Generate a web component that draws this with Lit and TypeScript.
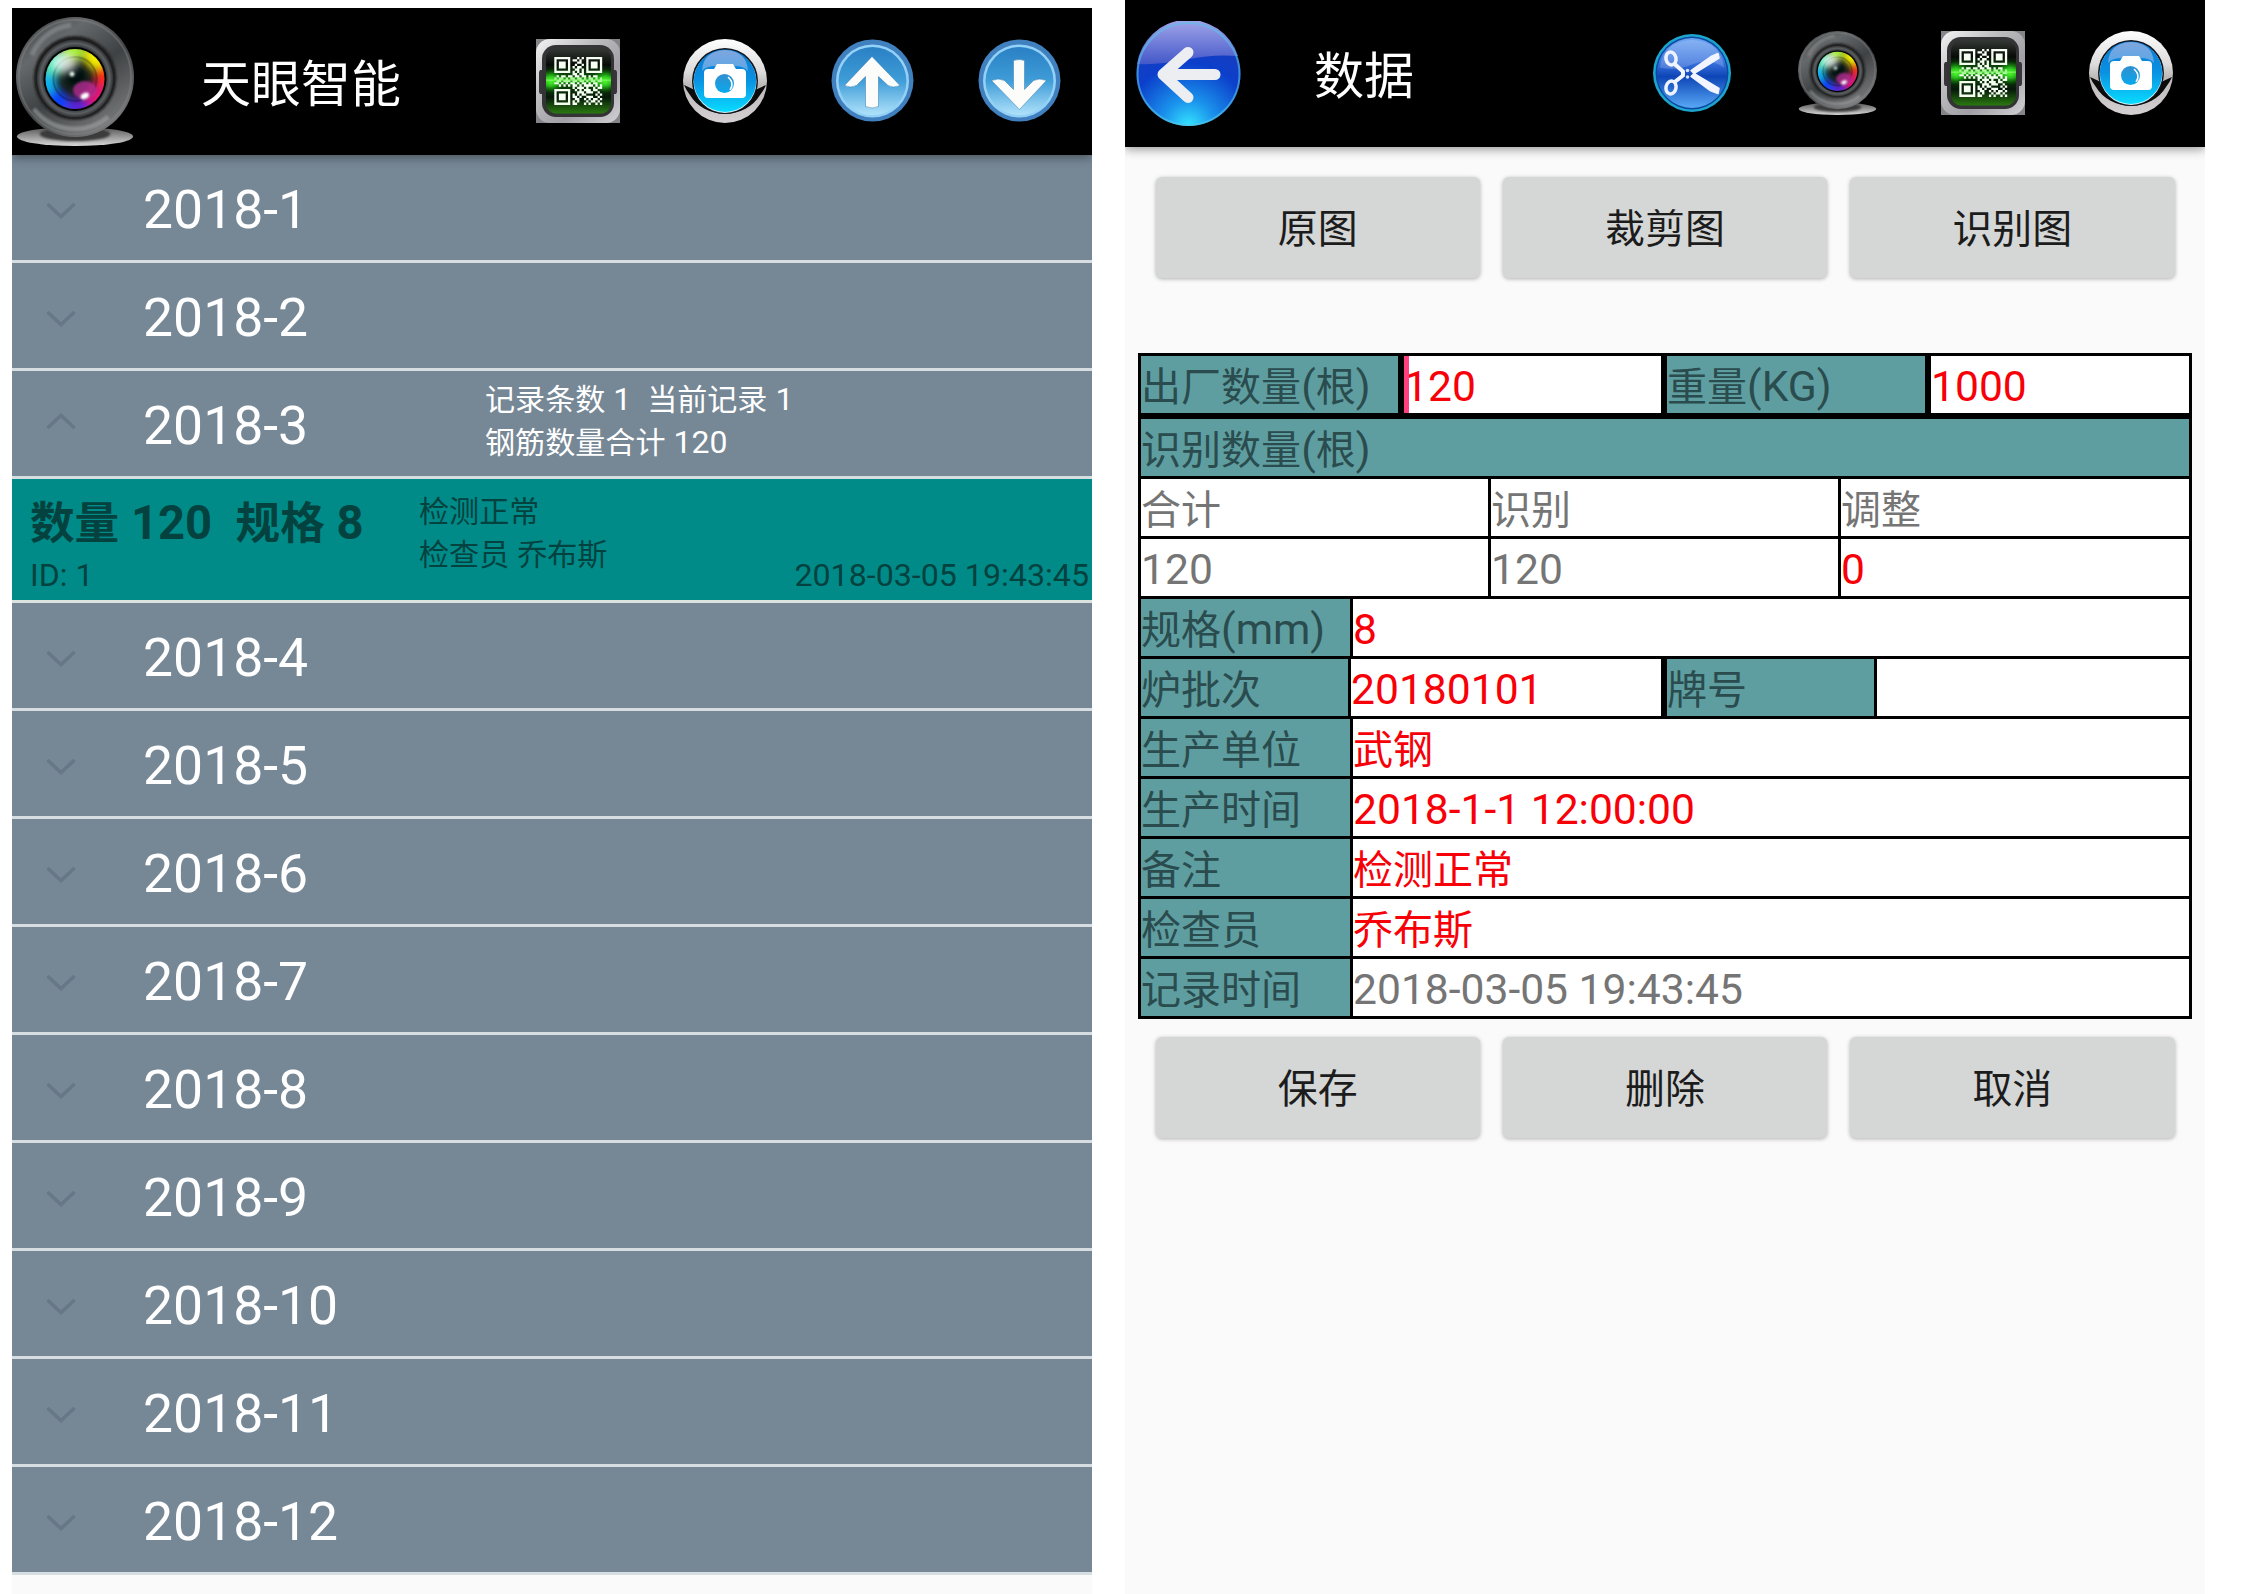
import { LitElement, html, svg, css, nothing } from "lit";
import { customElement, property } from "lit/decorators.js";
import { classMap } from "lit/directives/class-map.js";
import { styleMap } from "lit/directives/style-map.js";

/** Splits a label into Latin and Han runs; Han runs are set slightly smaller. */
const mixed = (text: string) =>
  text
    .split(/([\u4e00-\u9fff]+)/)
    .filter((run) => run.length > 0)
    .map((run) => (/[\u4e00-\u9fff]/.test(run) ? html`<span class="han">${run}</span>` : run));

const QR_ROWS = [
  "111111100010101111111",
  "100000101101001000001",
  "101110100011001011101",
  "101110100100101011101",
  "101110101011001011101",
  "100000100110101000001",
  "111111101010101111111",
  "000000001101100000000",
  "010110110110110101100",
  "101101011011010110101",
  "011011101101101011011",
  "110101011010110101100",
  "001010101101011110101",
  "000000001011101001011",
  "111111100101011101100",
  "100000100011101110010",
  "101110101010110000101",
  "101110101101001110010",
  "101110100110010101101",
  "100000101010001011010",
  "111111101100010100101",
];

const qrPath = QR_ROWS.map((row, y) =>
  [...row].map((bit, x) => (bit === "1" ? `M${x} ${y}h1v1h-1z` : "")).join("")
).join("");

const webcam = svg`
  <defs>
    <linearGradient id="base" x1="0" y1="0" x2="0" y2="1">
      <stop offset="0" stop-color="#555"/><stop offset="1" stop-color="#d8d8d8"/>
    </linearGradient>
    <linearGradient id="shell" x1="0" y1="0" x2=".7" y2="1">
      <stop offset="0" stop-color="#3c3e40"/><stop offset=".3" stop-color="#66696b"/>
      <stop offset=".6" stop-color="#3f4244"/><stop offset="1" stop-color="#77797a"/>
    </linearGradient>
    <radialGradient id="ring">
      <stop offset=".6" stop-color="#0a0a0a"/><stop offset=".8" stop-color="#303335"/>
      <stop offset=".9" stop-color="#5c5f61"/><stop offset="1" stop-color="#2c2e30"/>
    </radialGradient>
    <clipPath id="lens"><circle cx="60" cy="62" r="30"/></clipPath>
    <filter id="soft" x="-50%" y="-50%" width="200%" height="200%"><feGaussianBlur stdDeviation="4.5"/></filter>
    <filter id="fine" x="-50%" y="-50%" width="200%" height="200%"><feGaussianBlur stdDeviation="1.3"/></filter>
  </defs>
  <ellipse cx="60" cy="119.500" rx="59" ry="9.500" fill="url(#base)"/>
  <ellipse cx="60" cy="117" rx="36" ry="7" fill="#3b3b3b" filter="url(#fine)"/>
  <circle cx="60" cy="60" r="60" fill="url(#shell)"/>
  <circle cx="60" cy="60" r="57" fill="none" stroke="#8b8e90" stroke-opacity=".35" stroke-width="2"/>
  <path d="M18 92a54 54 0 0 0 76 8" fill="none" stroke="#a5a8aa" stroke-opacity=".55" stroke-width="5" filter="url(#fine)"/>
  <path d="M16 38a50 50 0 0 1 40-30" fill="none" stroke="#8f9294" stroke-opacity=".6" stroke-width="5" filter="url(#fine)"/>
  <circle cx="60" cy="61" r="42" fill="#1b1c1d" filter="url(#fine)"/>
  <circle cx="60" cy="61.500" r="39" fill="url(#ring)"/>
  <circle cx="60" cy="62" r="32" fill="#030303"/>
  <g clip-path="url(#lens)">
    <rect x="30" y="32" width="60" height="60" fill="#222"/>
    <g filter="url(#soft)">
      <circle cx="82" cy="40" r="13" fill="#f4f000"/>
      <circle cx="92" cy="60" r="12" fill="#ff2a10"/>
      <circle cx="83" cy="80" r="13" fill="#e01472"/>
      <circle cx="63" cy="94" r="13" fill="#5a20d8"/>
      <circle cx="41" cy="86" r="13" fill="#1042ff"/>
      <circle cx="30" cy="66" r="12" fill="#10b4f0"/>
      <circle cx="37" cy="46" r="13" fill="#45dfb0"/>
      <circle cx="58" cy="33" r="12" fill="#a4ee30"/>
    </g>
    <circle cx="60" cy="62" r="22" fill="none" stroke="#000" stroke-opacity=".25" stroke-width="2"/>
    <circle cx="60" cy="60" r="12" fill="#04140c" filter="url(#soft)"/>
    <circle cx="60" cy="58" r="8" fill="#050d08" filter="url(#fine)"/>
    <ellipse cx="49" cy="46" rx="13" ry="10" fill="#fff" fill-opacity=".75" filter="url(#soft)"/>
    <ellipse cx="70" cy="73" rx="12" ry="9" fill="#b02a90" fill-opacity=".8" filter="url(#fine)"/>
  </g>
  <circle cx="57" cy="57" r="2.500" fill="#dff5e8" filter="url(#fine)"/>
  <ellipse cx="70" cy="79" rx="4.500" ry="3" fill="#fff" filter="url(#fine)" transform="rotate(-25 70 79)"/>`;

const qr = svg`
  <defs>
    <linearGradient id="frame" x1="0" y1="0" x2="1" y2="1">
      <stop offset="0" stop-color="#f4f4f4"/><stop offset=".35" stop-color="#bdbdc0"/>
      <stop offset=".65" stop-color="#a2a0a6"/><stop offset="1" stop-color="#d2d2d6"/>
    </linearGradient>
    <linearGradient id="screen" x1="0" y1="0" x2="0" y2="1">
      <stop offset="0" stop-color="#343834"/><stop offset=".25" stop-color="#070a07"/>
      <stop offset=".42" stop-color="#0e4a0b"/><stop offset=".5" stop-color="#1d8a12"/>
      <stop offset=".6" stop-color="#0b3a08"/><stop offset=".75" stop-color="#06180a"/><stop offset="1" stop-color="#2a7a10"/>
    </linearGradient>
    <radialGradient id="beam"><stop offset="0" stop-color="#5dff3a"/><stop offset=".45" stop-color="#2fd820" stop-opacity=".75"/><stop offset="1" stop-color="#0c8000" stop-opacity="0"/></radialGradient>
    <clipPath id="pane"><rect x="10" y="9.500" width="65" height="65" rx="10"/></clipPath>
  </defs>
  <rect width="84" height="84" fill="#858589"/>
  <rect width="84" height="84" rx="14" fill="url(#frame)"/>
  <path d="M4 31h5v24H4l-1-2V33z" fill="#38363a"/>
  <path d="M80 31h-5v24h5l1-2V33z" fill="#38363a"/>
  <rect x="6" y="6" width="72" height="72" rx="14" fill="#343336"/>
  <rect x="10" y="9.500" width="65" height="65" rx="10" fill="url(#screen)"/>
  <g clip-path="url(#pane)">
    <ellipse cx="15" cy="42" rx="14" ry="12" fill="url(#beam)"/>
    <ellipse cx="69" cy="42" rx="14" ry="12" fill="url(#beam)"/>
  </g>
  <path d=${qrPath} fill="#f5fff2" transform="translate(18.300 18) scale(2.280)"/>
  <rect x="10" y="38" width="65" height="6" fill="#3be01e" fill-opacity=".35"/>
  <rect x="10" y="40.500" width="65" height="1.300" fill="#8cff70" fill-opacity=".7"/>`;

const camera = svg`
  <defs>
    <linearGradient id="rim" x1="0" y1="0" x2="0" y2="1">
      <stop offset="0" stop-color="#fff"/><stop offset=".4" stop-color="#dcdada"/>
      <stop offset=".55" stop-color="#bdb9b9"/><stop offset="1" stop-color="#d5d0d3"/>
    </linearGradient>
    <linearGradient id="glass" x1="0" y1="0" x2="0" y2="1">
      <stop offset="0" stop-color="#0a78d0"/><stop offset=".5" stop-color="#0a92e2"/><stop offset="1" stop-color="#08dcff"/>
    </linearGradient>
    <linearGradient id="gloss" x1="0" y1="0" x2="0" y2="1">
      <stop offset="0" stop-color="#7fa6de"/><stop offset="1" stop-color="#5ba7e6"/>
    </linearGradient>
    <linearGradient id="eye" x1="0" y1="0" x2="0" y2="1">
      <stop offset="0" stop-color="#2f8fd0"/><stop offset="1" stop-color="#0aa9ec"/>
    </linearGradient>
  </defs>
  <circle cx="42" cy="42" r="42" fill="url(#rim)"/>
  <path d="M1 46L12 51H72L83 46A41.500 41.500 0 0 1 77 56 39.500 35 0 0 1 7 56 41.500 41.500 0 0 1 1 46z" fill="#0b0b0c"/>
  <circle cx="42" cy="42" r="33" fill="#10151c"/>
  <circle cx="42" cy="42.500" r="31.500" fill="#d8f4ff"/>
  <circle cx="42" cy="41.700" r="31.200" fill="url(#glass)"/>
  <path d="M19 32Q20 12 42 11 64 12 65 32q-4-5-14-5H33q-10 0-14 5z" fill="url(#gloss)"/>
  <path d="M25 30h6l3-5h16l3 5h6q4 0 4 4v21q0 4-4 4H25q-4 0-4-4V34q0-4 4-4z" fill="#fff"/>
  <circle cx="41.500" cy="44.500" r="9.500" fill="url(#eye)"/>
  <path d="M45 38q7 6 2 13" fill="none" stroke="#fff" stroke-width="1.500"/>`;

const arrowDisc = (arrow: unknown) => svg`
  <defs>
    <linearGradient id="disc" x1="0" y1="0" x2="0" y2="1">
      <stop offset="0" stop-color="#2a80c4"/><stop offset=".5" stop-color="#3f9dd8"/><stop offset="1" stop-color="#b0e2fa"/>
    </linearGradient>
  </defs>
  <circle cx="41.500" cy="41.500" r="41" fill="#4080bf"/>
  <circle cx="41.500" cy="42" r="36.500" fill="#93d1f7"/>
  <circle cx="41.500" cy="42" r="34" fill="url(#disc)"/>
  ${arrow}`;

const up = arrowDisc(svg`<path d="M41 17.500L69 46.500q-7 3-12 0L47.500 37.500v30q-6 3-13 0V37.500l-9 9q-6 3-12 0z" fill="#fcfdfb" stroke="#2d77ae" stroke-opacity=".5"/>`);
const down = arrowDisc(svg`<path d="M35.500 21.500q6-2 11 0v29l9-9q6-3 13 0L41.500 70.500 13.500 41.500q7-3 13 0l9 9z" fill="#fcfdfb" stroke="#2d77ae" stroke-opacity=".5"/>`);

const back = svg`
  <defs>
    <radialGradient id="orb" cx=".5" cy="1" r="1"><stop offset="0" stop-color="#35e4ff"/><stop offset=".25" stop-color="#1a93ec"/><stop offset=".6" stop-color="#0c3fcb"/><stop offset="1" stop-color="#1f3ab8"/></radialGradient>
    <linearGradient id="cap" x1="0" y1="0" x2="0" y2="1"><stop offset="0" stop-color="#a2a5ea"/><stop offset="1" stop-color="#4358c8"/></linearGradient>
  </defs>
  <circle cx="52.500" cy="53" r="52" fill="url(#orb)"/>
  <path d="M1 43A52 52 0 0 1 102 35Q76 33 54 38 26 44 1 43z" fill="url(#cap)"/>
  <circle cx="52.500" cy="53" r="51" fill="none" stroke="#58c3e8" stroke-opacity=".6" stroke-width="2"/>
  <path d="M79 53.500H31M52 31.500L27 53.500l25 23" fill="none" stroke="#edeef2" stroke-width="11" stroke-linecap="round" stroke-linejoin="round"/>`;

const scissors = svg`
  <defs>
    <linearGradient id="pool" x1="0" y1="0" x2="0" y2="1"><stop offset="0" stop-color="#6fa6f2"/><stop offset=".35" stop-color="#3a72de"/><stop offset=".55" stop-color="#0d45b6"/><stop offset="1" stop-color="#58a8f6"/></linearGradient>
  </defs>
  <g transform="translate(0 .5)">
  <circle cx="42" cy="41.500" r="39" fill="#1ca6cf"/>
  <circle cx="42" cy="41.500" r="36.500" fill="#0c4aa0"/>
  <circle cx="42" cy="41.500" r="35" fill="url(#pool)"/>
  <path d="M10 36Q13 10 42 8.500 71 10 74 36 58 26 42 33 26 40 10 36z" fill="#fff" fill-opacity=".18"/>
  <g fill="none" stroke="#eef3ff" stroke-width="3.500">
    <ellipse cx="21" cy="27" rx="5" ry="6.500" transform="rotate(-12 21 27)"/>
    <ellipse cx="21" cy="56" rx="5" ry="6.500" transform="rotate(12 21 56)"/>
  </g>
  <path d="M41 39l20-14 7-3 1 4.500L44 42zM41 45l19 14 8 3 1-5L44 42z" fill="#f2f5ff" stroke="#f2f5ff" stroke-width="1.500" stroke-linejoin="round"/>
  <path d="M24 32l9 8v4l-9 7" fill="none" stroke="#f2f5ff" stroke-width="4" stroke-linejoin="round"/>
  <circle cx="37.500" cy="39" r="1.800" fill="#cfe0ff"/><circle cx="37.500" cy="45.500" r="1.800" fill="#cfe0ff"/>
  </g>`;

const ICONS: Record<string, { box: string; art: unknown }> = {
  webcam: { box: "0 0 120 129", art: webcam },
  qr: { box: "0 0 84 84", art: qr },
  camera: { box: "0 0 84 84", art: camera },
  up: { box: "0 0 84 84", art: up },
  down: { box: "0 0 84 84", art: down },
  back: { box: "0 0 105 107", art: back },
  scissors: { box: "0 0 84 84", art: scissors },
};

@customElement("app-icon")
class AppIcon extends LitElement {
  static styles = css`
    :host { display: block; flex: none; }
    .art { display: block; width: 100%; height: 100%; }
  `;
  @property() name = "qr";
  render() {
    const icon = ICONS[this.name];
    return html`<svg class="art" viewBox=${icon.box} preserveAspectRatio="none">${icon.art}</svg>`;
  }
}

const shared = css`
  * { box-sizing: border-box; }
  :host {
    display: flex;
    flex-direction: column;
    width: 1080px;
    height: 100%;
    overflow: hidden;
    background: #fafafa;
    font-family: Roboto, "Noto Sans CJK SC", sans-serif;
    white-space: pre;
  }
  .han { font-size: 0.94em; line-height: 0; }
  .bar {
    position: relative;
    flex: none;
    display: flex;
    align-items: flex-start;
    height: 147px;
    background: #000;
    color: #fff;
    box-shadow: 0 2px 10px rgba(0, 0, 0, 0.42);
  }
  .title { flex: 1; font-size: 50px; line-height: 70px; }
  .tool { width: 84px; height: 84px; }
`;

interface Month {
  label: string;
  open?: boolean;
}

const MONTHS: Month[] = Array.from({ length: 12 }, (_, i) => ({
  label: `2018-${i + 1}`,
  open: i === 2,
}));

@customElement("record-list")
class RecordList extends LitElement {
  static styles = [
    shared,
    css`
      .bar { padding: 31px 30px 0 4px; }
      .logo { width: 118px; height: 129px; margin-top: -22px; }
      .title { padding: 11px 0 0 67px; }
      .tools { display: flex; gap: 63.500px; }
      .month {
        flex: none;
        display: flex;
        height: 108px;
        border-bottom: 3px solid #d7dee1;
        background: #768796;
        color: #fff;
      }
      .mark { width: 34px; height: 20px; margin: 45px 0 0 32px; flex: none; }
      .mark.open { transform: scaleY(-1); margin-top: 41px; }
      .stroke { fill: none; stroke: #677787; stroke-width: 3.500; }
      .name { width: 342px; padding-left: 65px; font-size: 53.500px; line-height: 109px; }
      .totals { padding: 7px 0 0 65px; font-size: 32px; line-height: 43px; }
      .record {
        flex: none;
        display: grid;
        grid-template-columns: 388px 1fr auto;
        height: 124px;
        padding: 0 3px 0 18px;
        border-bottom: 3px solid #dbe3e0;
        background: #008b89;
        color: #04423f;
        font-size: 32px;
      }
      .count { font-size: 47.200px; font-weight: 700; line-height: 56px; padding-top: 16px; }
      .count .han { font-size: 0.945em; }
      .ident { line-height: 38px; padding-top: 5px; }
      .note { padding: 11px 0 0 1px; line-height: 43px; }
      .stamp { align-self: end; line-height: 38px; padding-bottom: 6px; font-size: 32.200px; }
    `,
  ];

  render() {
    return html`
      <header class="bar">
        <app-icon class="logo" name="webcam"></app-icon>
        <div class="title">天眼智能</div>
        <div class="tools">
          ${["qr", "camera", "up", "down"].map((n) => html`<app-icon class="tool" name=${n}></app-icon>`)}
        </div>
      </header>
      ${MONTHS.map(
        (m) => html`
          <div class="month">
            <svg class=${classMap({ mark: true, open: !!m.open })} viewBox="0 0 34 20">
              <path class="stroke" d="M3.500 4l13.500 12.500L30.500 4"></path>
            </svg>
            <div class="name">${m.label}</div>
            ${m.open
              ? html`<div class="totals"><div>${mixed("记录条数 1  当前记录 1")}</div><div>${mixed("钢筋数量合计 120")}</div></div>`
              : nothing}
          </div>
          ${m.open
            ? html`<div class="record">
                <div><div class="count">${mixed("数量 120  规格 8")}</div><div class="ident">ID: 1</div></div>
                <div class="note"><div>${mixed("检测正常")}</div><div>${mixed("检查员 乔布斯")}</div></div>
                <div class="stamp">2018-03-05 19:43:45</div>
              </div>`
            : nothing}
        `
      )}
    `;
  }
}

type Kind = "head" | "edit" | "view";
interface Cell {
  text: string;
  kind: Kind;
  width?: number;
  wide?: boolean;
  focused?: boolean;
}

const pair = (label: string, value: string, kind: Kind = "edit"): Cell[] => [
  { text: label, kind: "head", width: 209 },
  { text: value, kind },
];

const ROWS: Cell[][] = [
  [
    { text: "出厂数量(根)", kind: "head", width: 257 },
    { text: "120", kind: "edit", width: 257, wide: true, focused: true },
    { text: "重量(KG)", kind: "head", width: 258, wide: true },
    { text: "1000", kind: "edit", wide: true },
  ],
  [{ text: "识别数量(根)", kind: "head" }],
  [
    { text: "合计", kind: "view", width: 347 },
    { text: "识别", kind: "view", width: 347 },
    { text: "调整", kind: "view" },
  ],
  [
    { text: "120", kind: "view", width: 347 },
    { text: "120", kind: "view", width: 347 },
    { text: "0", kind: "edit" },
  ],
  pair("规格(mm)", "8"),
  [
    { text: "炉批次", kind: "head", width: 207 },
    { text: "20180101", kind: "edit", width: 310 },
    { text: "牌号", kind: "head", width: 207, wide: true },
    { text: "", kind: "edit" },
  ],
  pair("生产单位", "武钢"),
  pair("生产时间", "2018-1-1 12:00:00"),
  pair("备注", "检测正常"),
  pair("检查员", "乔布斯"),
  pair("记录时间", "2018-03-05 19:43:45", "view"),
];

@customElement("record-form")
class RecordForm extends LitElement {
  static styles = [
    shared,
    css`
      .bar { padding: 31px 32px 0 11px; }
      .home { width: 105px; height: 107px; margin-top: -10px; }
      .title { padding: 11px 0 0 73px; }
      .tools { display: flex; gap: 61.500px; }
      .tool.last { margin-left: 2.500px; }
      .cam { width: 79px; height: 84px; margin: 0 3px 0 2px; }
      .actions {
        flex: none;
        display: grid;
        grid-template-columns: repeat(3, 1fr);
        grid-template-rows: 101px;
        gap: 23px;
        height: 101px;
        margin: 30px 30.500px 0;
      }
      .button {
        display: flex;
        align-items: center;
        justify-content: center;
        height: 101px;
        padding-top: 3px;
        border-radius: 6px;
        background: #d5d7d6;
        color: #1c1c1c;
        font-size: 42.500px;
        line-height: 60px;
        box-shadow: 0 1px 4px rgba(0, 0, 0, 0.3);
      }
      .table {
        flex: none;
        display: flex;
        flex-direction: column;
        gap: 3px;
        width: 1054px;
        margin: 75px 13px 0;
        padding: 3px;
        background: #000;
      }
      .row { display: flex; height: 57px; }
      .row.first { margin-bottom: 3px; }
      .cell {
        flex: 1;
        background: #fff;
        font-size: 42.600px;
        line-height: 61px;
        overflow: hidden;
      }
      .cell + .cell { margin-left: 3px; }
      .cell + .cell.wide { margin-left: 6px; }
      .cell.fixed { flex: none; }
      .head { background: #5f9ea0; color: #2a4c4e; }
      .edit { color: #f80008; }
      .view { color: #757575; }
      .cell.focused { border-left: 5px solid #ff3f80; }
      .focused .value { margin-left: -5px; position: relative; }
      .actions.lower { margin-top: 18px; }
    `,
  ];

  private actions(labels: string[], lower = false) {
    return html`<div class=${classMap({ actions: true, lower })}>
      ${labels.map((l) => html`<div class="button"><span>${mixed(l)}</span></div>`)}
    </div>`;
  }

  private cell(c: Cell) {
    const classes = {
      cell: true,
      [c.kind]: true,
      fixed: c.width !== undefined,
      wide: !!c.wide,
      focused: !!c.focused,
    };
    return html`<div class=${classMap(classes)} style=${styleMap(c.width ? { width: `${c.width}px` } : {})}><span class="value">${mixed(c.text)}</span></div>`;
  }

  render() {
    return html`
      <header class="bar">
        <app-icon class="home" name="back"></app-icon>
        <div class="title">数据</div>
        <div class="tools">
          ${["scissors", "webcam", "qr", "camera"].map(
            (n) =>
              html`<app-icon class=${classMap({ cam: n === "webcam", tool: n !== "webcam", last: n === "camera" })} name=${n}></app-icon>`
          )}
        </div>
      </header>
      ${this.actions(["原图", "裁剪图", "识别图"])}
      <div class="table">
        ${ROWS.map((row, i) => html`<div class=${classMap({ row: true, first: i === 0 })}>${row.map((c) => this.cell(c))}</div>`)}
      </div>
      ${this.actions(["保存", "删除", "取消"], true)}
    `;
  }
}

@customElement("app-root")
class AppRoot extends LitElement {
  static styles = css`
    :host {
      box-sizing: border-box;
      display: flex;
      gap: 33px;
      width: 2242px;
      height: 1594px;
      padding-left: 12px;
      background: #fff;
      overflow: hidden;
    }
    .left { height: 1586px; margin-top: 8px; }
    .right { height: 1594px; }
  `;
  render() {
    return html`<record-list class="left"></record-list><record-form class="right"></record-form>`;
  }
}
